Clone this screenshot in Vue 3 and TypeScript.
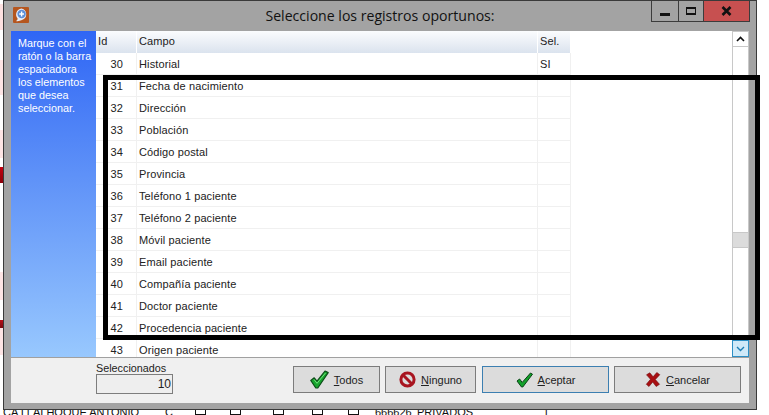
<script setup lang="ts">
interface Row { id: number; name: string; sel: string }
const names: string[] = ['Historial','Fecha de nacimiento','Dirección','Población','Código postal','Provincia','Teléfono 1 paciente','Teléfono 2 paciente','Móvil paciente','Email paciente','Compañía paciente','Doctor paciente','Procedencia paciente','Origen paciente']
const rows: Row[] = names.map((name, i) => ({ id: 30 + i, name, sel: i === 0 ? 'SI' : '' }))
const backCells: { text: string; width: number; box?: boolean }[] = [
  { text: 'CA I LAI HOQUE ANTONIO', width: 162 },
  { text: 'C', width: 28 },
  { text: '', width: 35, box: true },
  { text: '', width: 43, box: true },
  { text: '', width: 39, box: true },
  { text: '', width: 36, box: true },
  { text: '', width: 29, box: true },
  { text: '666626', width: 42 },
  { text: 'PRIVADOS', width: 126 },
  { text: '1', width: 20 },
]
</script>

<template>
  <div class="page">
    <div class="back-left"></div>
    <div class="window">
      <header class="titlebar">
        <svg class="app-icon" width="16" height="16" viewBox="0 0 16 16">
          <rect width="16" height="16" rx="1" fill="#b5561f"/>
          <path d="M8.500 1.500a6 6 0 0 1 .5 11.600C7 14 4.500 14.500 3 14c1.200-.8 1.600-1.600 1.600-2.600A6 6 0 0 1 8.500 1.500z" fill="#e8eef8"/>
          <circle cx="8.600" cy="7" r="4.200" fill="#5d8fd8"/>
          <path d="M8.600 4.600v4.800M6.200 7h4.800" stroke="#fff" stroke-width="1.400"/>
        </svg>
        <span class="title">Seleccione los registros oportunos:</span>
        <div class="controls">
          <button class="ctl min"><i class="bar"></i></button>
          <button class="ctl max"><i class="sq"></i></button>
          <button class="ctl close">
            <svg width="11" height="10" viewBox="0 0 11 10"><path d="M1.500 1l8 8M9.500 1l-8 8" stroke="#111" stroke-width="2.600"/></svg>
          </button>
        </div>
      </header>

      <div class="client">
        <div class="main">
          <aside class="side">Marque con el<br>ratón o la barra<br>espaciadora<br>los elementos<br>que desea<br>seleccionar.</aside>
          <section class="grid">
            <div class="table">
              <div class="row head">
                <div class="c id">Id</div>
                <div class="c name">Campo</div>
                <div class="c sel">Sel.</div>
              </div>
              <div v-for="r in rows" :key="r.id" class="row">
                <div class="c id num">{{ r.id }}</div>
                <div class="c name">{{ r.name }}</div>
                <div class="c sel">{{ r.sel }}</div>
              </div>
            </div>
            <div class="scroll">
              <div class="sbtn up">
                <svg width="9" height="6" viewBox="0 0 9 6"><path d="M1 5l3.500-3.500L8 5" fill="none" stroke="#111" stroke-width="1.600"/></svg>
              </div>
              <div class="track">
                <div class="thumb"></div>
              </div>
              <div class="sbtn down">
                <svg width="9" height="6" viewBox="0 0 9 6"><path d="M1 1l3.500 3.500L8 1" fill="none" stroke="#1f7fb5" stroke-width="1.400"/></svg>
              </div>
            </div>
          </section>
        </div>

        <footer class="foot">
          <div class="count">
            <label>Seleccionados</label>
            <output>10</output>
          </div>
          <div class="actions">
            <button class="btn todos">
              <svg width="19" height="19" viewBox="0 0 19 19"><path d="M.8 10.500l3.400-2.700 2.800 3.400L15 1l3.200 1.600L7.800 18H5.800z" fill="#17a52d" stroke="#0b4d17" stroke-width="1.200" stroke-linejoin="round"/><path d="M4 9.500l3 3.800L15.500 3" fill="none" stroke="#6fe07a" stroke-width="1"/></svg>
              <span><u>T</u>odos</span>
            </button>
            <button class="btn ninguno">
              <svg width="17" height="17" viewBox="0 0 17 17"><circle cx="8.500" cy="8.500" r="6.600" fill="none" stroke="#a81520" stroke-width="3"/><path d="M3.800 3.800l9.400 9.400" stroke="#a81520" stroke-width="3"/></svg>
              <span><u>N</u>inguno</span>
            </button>
            <button class="btn aceptar">
              <svg width="17" height="16" viewBox="0 0 17 16"><path d="M1 9l2.600-2 2.600 3.400L14.500 1l2 1.200L6.800 15H5.500z" fill="#12a02a" stroke="#0b4217" stroke-width="1" stroke-linejoin="round"/></svg>
              <span><u>A</u>ceptar</span>
            </button>
            <button class="btn cancelar">
              <svg width="16" height="15" viewBox="0 0 16 15"><path d="M1.500 2.800L4.800.8l3.300 4L11.800.5l3 2.200-4.500 4.800 4.200 4.800-3.300 2.200-3.500-4.500-3.700 4.500-2.700-2.200 4.200-5z" fill="#a80f12" stroke="#6e0a0c" stroke-width=".6"/></svg>
              <span><u>C</u>ancelar</span>
            </button>
          </div>
        </footer>
      </div>
    </div>

    <div class="back-row">
      <div v-for="(c, i) in backCells" :key="i" class="back-cell" :style="{ width: c.width + 'px' }">
        <i v-if="c.box" class="box"></i>
        <template v-else>{{ c.text }}</template>
      </div>
    </div>

    <div class="marker"></div>
  </div>
</template>

<style>
html, body { margin: 0; background: #fff; }
</style>

<style scoped>
.page {
  position: relative;
  width: 769px;
  height: 415px;
  overflow: hidden;
  background: #fff;
  font-family: "Liberation Sans", Arial, sans-serif;
  font-size: 11px;
  color: #222;
}
.back-left {
  position: absolute;
  left: 0;
  top: 0;
  width: 3px;
  height: 410px;
  background: linear-gradient(180deg,
    #fff 0, #fff 4px, #fde0e0 4px, #fde0e0 30px, #fff 30px, #fff 60px,
    #fde4e4 60px, #fde4e4 95px, #fff 95px, #fff 130px, #fde4e4 130px, #fde4e4 158px,
    #fff 158px, #fff 167px, #c40010 167px, #8c0008 183px, #fff 183px, #fff 272px,
    #fde4e4 272px, #fde4e4 300px, #fff 300px, #fff 320px, #b81018 320px, #7a0a10 328px,
    #fde4e4 328px, #fde4e4 355px, #fff 355px);
}
.window {
  position: relative;
  display: flex;
  flex-direction: column;
  box-sizing: border-box;
  width: 754px;
  height: 410px;
  margin-left: 3px;
  padding: 0 7px 6px 7px;
  background: #a3a3a3;
  border: 1px solid #3a3a3a;
}
.titlebar {
  position: relative;
  flex: none;
  display: flex;
  align-items: flex-start;
  height: 30px;
}
.app-icon {
  margin: 6px 0 0 2px;
}
.title {
  position: absolute;
  left: 0;
  right: 0;
  top: 6px;
  text-align: center;
  font-family: "Open Sans", sans-serif;
  font-size: 14.100px;
  line-height: 18px;
  color: #111;
}
.controls {
  display: flex;
  margin-left: auto;
  margin-right: -1px;
  height: 21px;
}
.ctl {
  display: flex;
  align-items: center;
  justify-content: center;
  box-sizing: border-box;
  height: 21px;
  padding: 0;
  border: 1px solid #3c3c3c;
  border-top: 0;
  background: #a3a3a3;
}
.min { width: 28px; }
.max { width: 26px; margin-left: -1px; }
.close { width: 47px; margin-left: -1px; background: #c75050; }
.bar { width: 10px; height: 3px; margin-top: 7px; background: #111; }
.sq { box-sizing: border-box; width: 10px; height: 8px; border: 1px solid #111; border-top-width: 2px; border-bottom-width: 2px; }
.client {
  flex: 1;
  min-height: 0;
  display: flex;
  flex-direction: column;
  background: #f0f0f0;
}
.main {
  flex: none;
  display: flex;
  height: 326px;
  background: #fff;
}
.side {
  flex: none;
  box-sizing: border-box;
  width: 85px;
  padding: 6px 0 0 7px;
  font-size: 10.800px;
  line-height: 13px;
  white-space: nowrap;
  color: #fff;
  background: linear-gradient(180deg, #2f66f5 0, #5f92f8 45%, #98c8fe 100%);
}
.grid {
  flex: 1;
  min-width: 0;
  display: flex;
}
.table {
  flex: 1;
  min-width: 0;
  height: 326px;
  overflow: hidden;
}
.row {
  display: flex;
  box-sizing: border-box;
  height: 22px;
  line-height: 23px;
}
.c {
  box-sizing: border-box;
  height: 22px;
  border-right: 1px solid #f0f0f0;
  border-bottom: 1px solid #f0f0f0;
  letter-spacing: 0.12px;
  white-space: nowrap;
}
.id { width: 41px; padding-left: 2px; }
.num { padding: 0 13px 0 0; text-align: right; }
.name { width: 401px; padding-left: 2px; }
.sel { width: 33px; padding-left: 2px; }
.head { height: 22px; line-height: 21px; }
.head .c {
  background: linear-gradient(180deg, #fbfcfe 0, #dbe3ee 100%);
  border-right-color: #fff;
  border-bottom: 0;
}
.scroll {
  flex: none;
  display: flex;
  flex-direction: column;
  box-sizing: border-box;
  width: 17px;
  height: 326px;
  background: #fff;
  border-left: 1px solid #c8c8c8;
  border-right: 1px solid #c8c8c8;
}
.sbtn {
  flex: none;
  display: flex;
  align-items: center;
  justify-content: center;
  height: 16px;
  box-sizing: border-box;
}
.up { border-top: 1px solid #c8c8c8; border-bottom: 1px solid #c8c8c8; }
.down {
  margin: 0 -1px;
  height: 17px;
  background: #cfe9f8;
  border: 1px solid #2d8fc5;
}
.track {
  flex: 1;
  padding-top: 185px;
}
.thumb {
  height: 16px;
  box-sizing: border-box;
  background: #dcdcdc;
  border-top: 1px solid #c8c8c8;
  border-bottom: 1px solid #c8c8c8;
}
.foot {
  flex: 1;
  display: flex;
  align-items: flex-start;
  border-top: 1px solid #a0a0a0;
  padding-left: 85px;
}
.count {
  flex: none;
  display: flex;
  flex-direction: column;
  width: 77px;
  padding-top: 4px;
}
.count label {
  height: 12px;
  line-height: 12px;
  font-size: 10.800px;
  white-space: nowrap;
}
.count output {
  box-sizing: border-box;
  height: 20px;
  line-height: 18px;
  padding-right: 1px;
  text-align: right;
  font-size: 12px;
  background: #eeeeee;
  border: 1px solid #7d7d7d;
}
.actions {
  display: flex;
  margin: 8px 0 0 120px;
}
.btn {
  display: flex;
  align-items: center;
  justify-content: center;
  gap: 5px;
  box-sizing: border-box;
  height: 27px;
  padding: 0;
  font: inherit;
  font-size: 11px;
  color: #222;
  background: #dcdcdc;
  border: 1px solid #7c7c7c;
}
.todos { width: 87px; margin-right: 5px; }
.ninguno { width: 91px; margin-right: 6px; }
.aceptar { width: 127px; margin-right: 5px; border-color: #3c7fb1; }
.cancelar { width: 127px; }
.back-row {
  display: flex;
  height: 5px;
  padding-left: 3px;
  font-size: 11px;
  color: #111;
}
.back-cell {
  flex: none;
  height: 5px;
  display: flex;
  align-items: flex-end;
  white-space: nowrap;
  overflow: hidden;
  line-height: 6px;
}
.box {
  display: block;
  box-sizing: border-box;
  width: 11px;
  height: 5px;
  border: 1px solid #111;
  border-top: 0;
  margin-left: 2px;
}
.marker {
  position: absolute;
  left: 103px;
  top: 75px;
  box-sizing: border-box;
  width: 657px;
  height: 265px;
  border: 5px solid #000;
}
</style>
